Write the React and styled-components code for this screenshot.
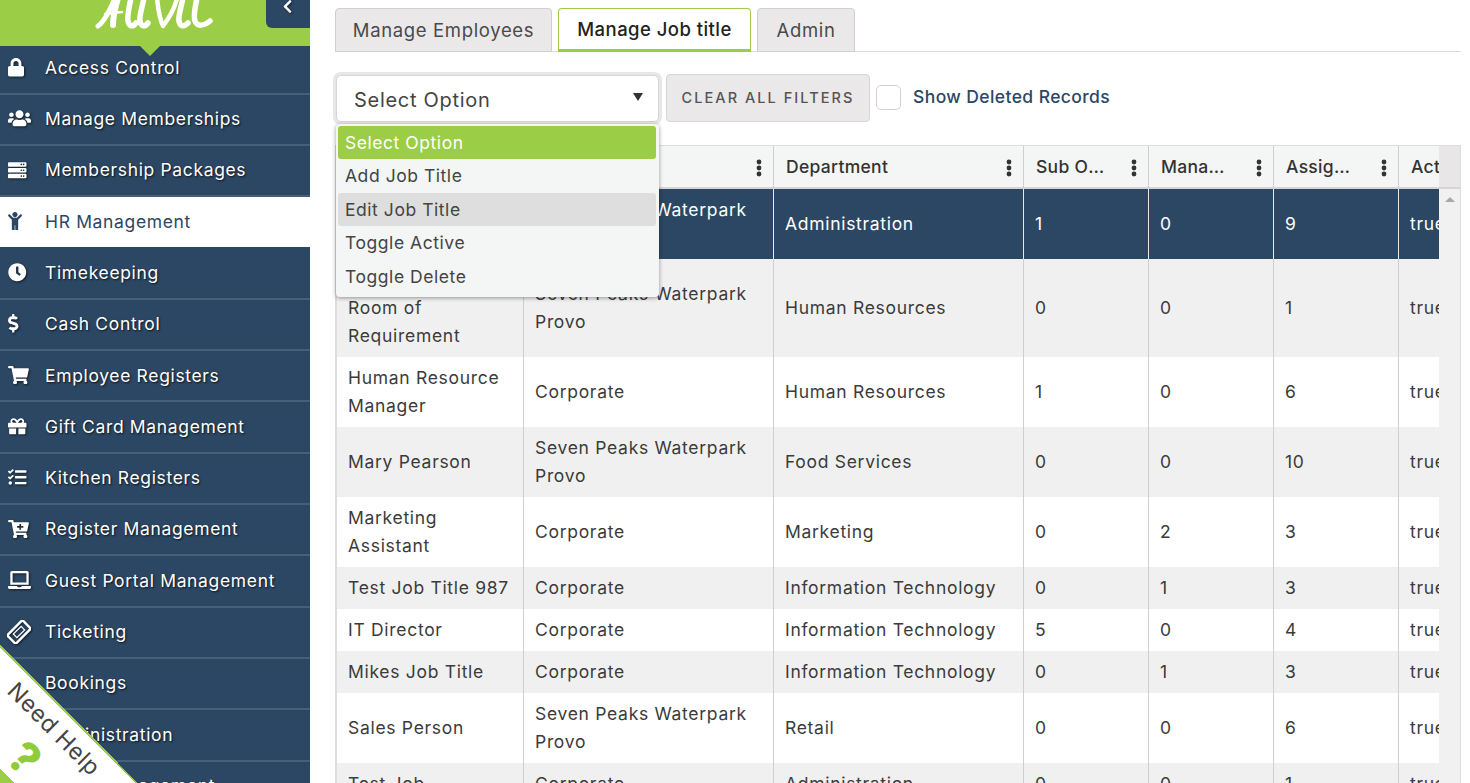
import React from 'react';
import styled, { createGlobalStyle } from 'styled-components';
import {
  FaLock, FaUsers, FaServer, FaChild, FaClock, FaDollarSign, FaShoppingCart, FaGift, FaTasks,
  FaCartPlus, FaLaptop, FaCalendarAlt, FaCog, FaBoxes, FaChevronLeft,
} from 'react-icons/fa';

const Global = createGlobalStyle`
  html, body { margin: 0; padding: 0; height: 100%; background: #fff; overflow: hidden; }
  * { box-sizing: border-box; }
  body { font-family: Inter, "Open Sans", "Liberation Sans", sans-serif; color: #3b3b3b; }
`;

const Page = styled.div`
  display: flex;
  width: 1470px;
  height: 783px;
  overflow: hidden;
  position: relative;
`;

const Sidebar = styled.aside`
  width: 310px;
  flex: none;
  background: #2c4763;
  display: flex;
  flex-direction: column;
`;

const Brand = styled.div`
  height: 46px;
  flex: none;
  background: #9bcd46;
  display: flex;
  justify-content: space-between;
  position: relative;
  &::after {
    content: '';
    position: absolute;
    left: 140px;
    top: 46px;
    border-left: 10px solid transparent;
    border-right: 10px solid transparent;
    border-top: 10px solid #9bcd46;
    z-index: 2;
  }
`;

const Logo = styled.svg`
  width: 130px;
  height: 30px;
  margin-left: 90px;
`;

const Collapse = styled.div`
  width: 44px;
  height: 28px;
  background: #2c4763;
  border-bottom-left-radius: 6px;
  color: #fff;
  display: flex;
  align-items: flex-start;
  justify-content: center;
  padding-right: 2px;
  font-size: 15px;
  line-height: 0;
  svg { margin-top: -1px; filter: drop-shadow(1px 1px 1px rgba(0,0,0,.5)); }
`;

const Nav = styled.nav`
  display: flex;
  flex-direction: column;
`;

const NavItem = styled.a`
  height: 51.3px;
  flex: none;
  display: flex;
  align-items: center;
  padding: 0 0 1.6px 8px;
  font-size: 17.5px;
  letter-spacing: 0.65px;
  color: ${p => (p.$active ? '#2c4763' : '#fff')};
  background: ${p => (p.$active ? '#fff' : 'transparent')};
  text-shadow: ${p => (p.$active ? 'none' : '1px 1px 2px rgba(0,0,0,.75)')};
  border-bottom: 2px solid ${p => (p.$active ? '#2c4763' : '#45607b')};
  &:first-child { height: 48.7px; padding-bottom: 4px; }
`;

const NavIcon = styled.span`
  width: 37px;
  flex: none;
  display: flex;
  svg {
    width: ${p => p.$w}px;
    height: 18.5px;
    filter: ${p => (p.$active ? 'none' : 'drop-shadow(1px 1px 1px rgba(0,0,0,.6))')};
  }
`;

const TicketSvg = styled.svg`
  && { width: 24px; height: 24px; margin: -3px 0 -3px -1px; }
`;

const TicketIcon = () => (
  <TicketSvg viewBox="0 0 24 24">
    <g transform="rotate(-45 12 12)" fill="none" stroke="#fff">
      <rect x="1.2" y="6" width="21.6" height="12" rx="1.5" strokeWidth="2.4" />
      <rect x="6.5" y="9.5" width="11" height="5" strokeWidth="1.2" />
    </g>
  </TicketSvg>
);

const Main = styled.main`
  flex: 1;
  min-width: 0;
  padding: 8px 9px 0 25px;
`;

const Tabs = styled.div`
  display: flex;
  gap: 6px;
  height: 44px;
  border-bottom: 1px solid #ddd;
`;

const Tab = styled.div`
  height: 44px;
  width: ${p => p.$w}px;
  display: flex;
  align-items: center;
  justify-content: center;
  font-size: 18.5px;
  letter-spacing: ${p => (p.$active ? '0.45px' : '0.65px')};
  border-radius: 4px 4px 0 0;
  background: ${p => (p.$active ? '#fff' : '#eae8e9')};
  color: ${p => (p.$active ? '#222' : '#4a4a4a')};
  font-weight: ${p => (p.$active ? 500 : 400)};
  border: 1px solid ${p => (p.$active ? '#9bcd46' : '#cfcfcf')};
  border-bottom: ${p => (p.$active ? '3px solid #9bcd46' : '1px solid #cfcfcf')};
`;

const Toolbar = styled.div`
  display: flex;
  align-items: center;
  margin: 22px 0 0 1px;
  height: 48px;
`;

const SelectWrap = styled.div`
  position: relative;
  width: 323px;
  height: 47px;
  flex: none;
`;

const SelectBox = styled.div`
  height: 47px;
  background: #fff;
  border-radius: 5px;
  border: 1px solid #d6d6d6;
  box-shadow: 0 0 0 3px #e8e6e7;
  display: flex;
  align-items: center;
  justify-content: space-between;
  padding: 3px 15px 0 17px;
  font-size: 20px;
  letter-spacing: 0.7px;
  color: #444;
`;

const Caret = styled.span`
  width: 0;
  height: 0;
  border-left: 5px solid transparent;
  border-right: 5px solid transparent;
  border-top: 8px solid #333;
  margin-bottom: 5px;
`;

const Menu = styled.div`
  position: absolute;
  top: 49px;
  left: 0;
  width: 323px;
  height: 173px;
  background: #f4f6f5;
  border-radius: 4px;
  box-shadow: 0 1px 4px rgba(0,0,0,.4);
  padding: 2px 3px 0 2px;
  z-index: 5;
  display: flex;
  flex-direction: column;
`;

const Option = styled.div`
  height: 33.5px;
  flex: none;
  display: flex;
  align-items: center;
  padding-left: 7px;
  font-size: 17.5px;
  letter-spacing: 0.55px;
  border-radius: 3px;
  color: ${p => (p.$sel ? '#fff' : '#444')};
  background: ${p => (p.$sel ? '#9bcd46' : p.$hover ? '#dedede' : 'transparent')};
`;

const ClearButton = styled.button`
  width: 204px;
  height: 48px;
  margin-left: 7px;
  padding: 0 0 1px;
  background: #eae8e9;
  border: 1px solid #d6d6d6;
  border-radius: 4px;
  font: inherit;
  font-size: 14.5px;
  font-weight: 500;
  letter-spacing: 2.05px;
  text-transform: uppercase;
  color: #555;
`;

const CheckBox = styled.span`
  width: 25px;
  height: 25px;
  margin: 0 12px 2px 6px;
  background: #fff;
  border: 1px solid #d2d2d2;
  border-radius: 5px;
  flex: none;
`;

const CheckLabel = styled.span`
  font-size: 17.5px;
  letter-spacing: 0.4px;
  color: #2c4763;
  font-weight: 500;
  padding-bottom: 3px;
`;

const Frame = styled.div`
  display: flex;
  margin: 23px 0 0 0;
  width: 1126px;
  height: 700px;
  border-top: 1px solid #ddd;
  border-left: 2px solid #ddd;
  border-right: 1px solid #ddd;
`;

const Clip = styled.div`
  flex: 1;
  min-width: 0;
  overflow: hidden;
`;

const Table = styled.table`
  border-collapse: separate;
  border-spacing: 0;
  table-layout: fixed;
  width: 1187px;
  font-size: 17.5px;
  letter-spacing: 0.7px;
`;

const Head = styled.th`
  height: 43px;
  padding: 0;
  background: #f4f6f5;
  border-right: 1px solid #cfcfcf;
  border-bottom: 2px solid #d5d5d5;
  font-weight: 500;
  text-align: left;
  color: #333;
`;

const HeadInner = styled.div`
  display: flex;
  align-items: center;
  justify-content: space-between;
  padding: 3px 11px 0 12px;
`;

const HeadLabel = styled.span`
  overflow: hidden;
  white-space: nowrap;
  text-overflow: ellipsis;
  min-width: 0;
  letter-spacing: 0.3px;
  padding-bottom: 3px;
`;

const Dots = styled.svg`
  width: 6px;
  height: 18px;
  flex: none;
  margin-left: 25px;
`;

const Row = styled.tr`
  background: ${p => (p.$sel ? '#2c4763' : p.$odd ? '#f0f0f0' : '#fff')};
  color: ${p => (p.$sel ? '#fff' : '#3b3b3b')};
`;

const Cell = styled.td`
  padding: 7px 11px;
  line-height: 28px;
  border-right: 1px solid ${p => (p.$sel ? '#e8e8e8' : '#cfcfcf')};
  vertical-align: middle;
  white-space: nowrap;
  overflow: hidden;
`;

const WrapCell = styled(Cell)`
  white-space: normal;
`;

const ScrollCol = styled.div`
  width: 21px;
  flex: none;
  display: flex;
  flex-direction: column;
  background: #f1f1f1;
`;

const ScrollCorner = styled.div`
  height: 43px;
  background: #e8e6e7;
  border-bottom: 2px solid #d5d5d5;
`;

const ScrollUp = styled.div`
  margin: 8px auto 0;
  width: 0;
  height: 0;
  border-left: 5px solid transparent;
  border-right: 5px solid transparent;
  border-bottom: 5px solid #a8a8a8;
`;

const HelpCorner = styled.div`
  position: absolute;
  left: 0;
  bottom: 0;
  width: 138px;
  height: 138px;
  z-index: 10;
  background: linear-gradient(45deg, #9bcd46 0 10px, #fff 10px calc(50% - 2px), #9bcd46 calc(50% - 2px) 50%, transparent 50%);
`;

const HelpText = styled.span`
  position: absolute;
  left: -6px;
  top: 70px;
  transform: rotate(45deg);
  font-size: 23px;
  letter-spacing: 0.6px;
  white-space: nowrap;
  color: #444;
`;

const HelpMark = styled.span`
  position: absolute;
  left: 12px;
  top: 91px;
  transform: rotate(45deg);
  font-size: 44px;
  line-height: 1;
  font-weight: 800;
  color: #8fcb3a;
`;

const items = [
  ['Access Control', FaLock, 16],
  ['Manage Memberships', FaUsers, 23],
  ['Membership Packages', FaServer, 18.5],
  ['HR Management', FaChild, 14, true],
  ['Timekeeping', FaClock, 18.5],
  ['Cash Control', FaDollarSign, 10.5],
  ['Employee Registers', FaShoppingCart, 21],
  ['Gift Card Management', FaGift, 18.5],
  ['Kitchen Registers', FaTasks, 18.5],
  ['Register Management', FaCartPlus, 21],
  ['Guest Portal Management', FaLaptop, 23],
  ['Ticketing', TicketIcon, 24],
  ['Bookings', FaCalendarAlt, 16],
  ['Administration', FaCog, 18.5],
  ['Asset Management', FaBoxes, 21],
];

const SP = 'Seven Peaks Waterpark Provo';
const rows = [
  ['General Manager', SP, 'Administration', 1, 0, 9],
  ['Chamber Test Room of Requirement', SP, 'Human Resources', 0, 0, 1],
  ['Human Resource Manager', 'Corporate', 'Human Resources', 1, 0, 6],
  ['Mary Pearson', SP, 'Food Services', 0, 0, 10],
  ['Marketing Assistant', 'Corporate', 'Marketing', 0, 2, 3],
  ['Test Job Title 987', 'Corporate', 'Information Technology', 0, 1, 3],
  ['IT Director', 'Corporate', 'Information Technology', 5, 0, 4],
  ['Mikes Job Title', 'Corporate', 'Information Technology', 0, 1, 3],
  ['Sales Person', SP, 'Retail', 0, 0, 6],
  ['Test Job', 'Corporate', 'Administration', 0, 0, 1],
];
const heads = ['Job Title', 'Location', 'Department', 'Sub Ordinates', 'Managers', 'Assigned', 'Active'];
const widths = [187, 250, 250, 125, 125, 125, 125];

const DotsIcon = () => (
  <Dots viewBox="0 0 6 18"><circle cx="3" cy="3" r="2.4" fill="#333" /><circle cx="3" cy="9" r="2.4" fill="#333" /><circle cx="3" cy="15" r="2.4" fill="#333" /></Dots>
);

export default function App() {
  return (
    <Page>
      <Global />
      <Sidebar>
        <Brand>
          <Logo viewBox="0 0 130 30">
            <g fill="none" stroke="#fff" strokeLinecap="round" strokeLinejoin="round">
              <path d="M8 26 C 14 22, 20 10, 25 -2" strokeWidth="5" />
              <path d="M28 -2 C 25 8, 23 16, 23 25" strokeWidth="6" />
              <path d="M15 14 L 32 12" strokeWidth="2.5" />
              <path d="M41 -2 C 39 8, 37 16, 38 21 C 39 27, 43 27, 46 23" strokeWidth="5.5" />
              <path d="M54 -2 C 52 8, 49 16, 50 21 C 51 27, 55 27, 58 23" strokeWidth="5.5" />
              <path d="M67 -2 C 68 8, 69 18, 73 26 C 79 18, 85 8, 87 -2" strokeWidth="4.5" />
              <path d="M93 -2 C 91 8, 88 16, 89 21 C 90 27, 94 27, 98 23" strokeWidth="5.5" />
              <path d="M107 -2 C 105 8, 103 16, 105 21 C 107 27, 114 26, 120 21" strokeWidth="5.5" />
            </g>
          </Logo>
          <Collapse><FaChevronLeft /></Collapse>
        </Brand>
        <Nav>
          {items.map(([label, Icon, w, active]) => (
            <NavItem key={label} $active={active}>
              <NavIcon $active={active} $w={w}><Icon /></NavIcon>
              {label}
            </NavItem>
          ))}
        </Nav>
      </Sidebar>
      <Main>
        <Tabs>
          <Tab $w={217}>Manage Employees</Tab>
          <Tab $w={193} $active>Manage Job title</Tab>
          <Tab $w={98}>Admin</Tab>
        </Tabs>
        <Toolbar>
          <SelectWrap>
            <SelectBox>Select Option<Caret /></SelectBox>
            <Menu>
              <Option $sel>Select Option</Option>
              <Option>Add Job Title</Option>
              <Option $hover>Edit Job Title</Option>
              <Option>Toggle Active</Option>
              <Option>Toggle Delete</Option>
            </Menu>
          </SelectWrap>
          <ClearButton>Clear All Filters</ClearButton>
          <CheckBox />
          <CheckLabel>Show Deleted Records</CheckLabel>
        </Toolbar>
        <Frame>
          <Clip>
            <Table>
              <colgroup>{widths.map((w, i) => <col key={i} style={{ width: w }} />)}</colgroup>
              <thead>
                <tr>
                  {heads.map(h => (
                    <Head key={h}>
                      <HeadInner><HeadLabel>{h}</HeadLabel><DotsIcon /></HeadInner>
                    </Head>
                  ))}
                </tr>
              </thead>
              <tbody>
                {rows.map((r, i) => (
                  <Row key={i} $sel={i === 0} $odd={i % 2 === 1}>
                    <WrapCell $sel={i === 0}>{r[0]}</WrapCell>
                    <WrapCell $sel={i === 0}>{r[1]}</WrapCell>
                    {r.slice(2).map((v, j) => <Cell key={j} $sel={i === 0}>{v}</Cell>)}
                    <Cell $sel={i === 0}>true</Cell>
                  </Row>
                ))}
              </tbody>
            </Table>
          </Clip>
          <ScrollCol><ScrollCorner /><ScrollUp /></ScrollCol>
        </Frame>
      </Main>
      <HelpCorner>
        <HelpText>Need Help</HelpText>
        <HelpMark>?</HelpMark>
      </HelpCorner>
    </Page>
  );
}
